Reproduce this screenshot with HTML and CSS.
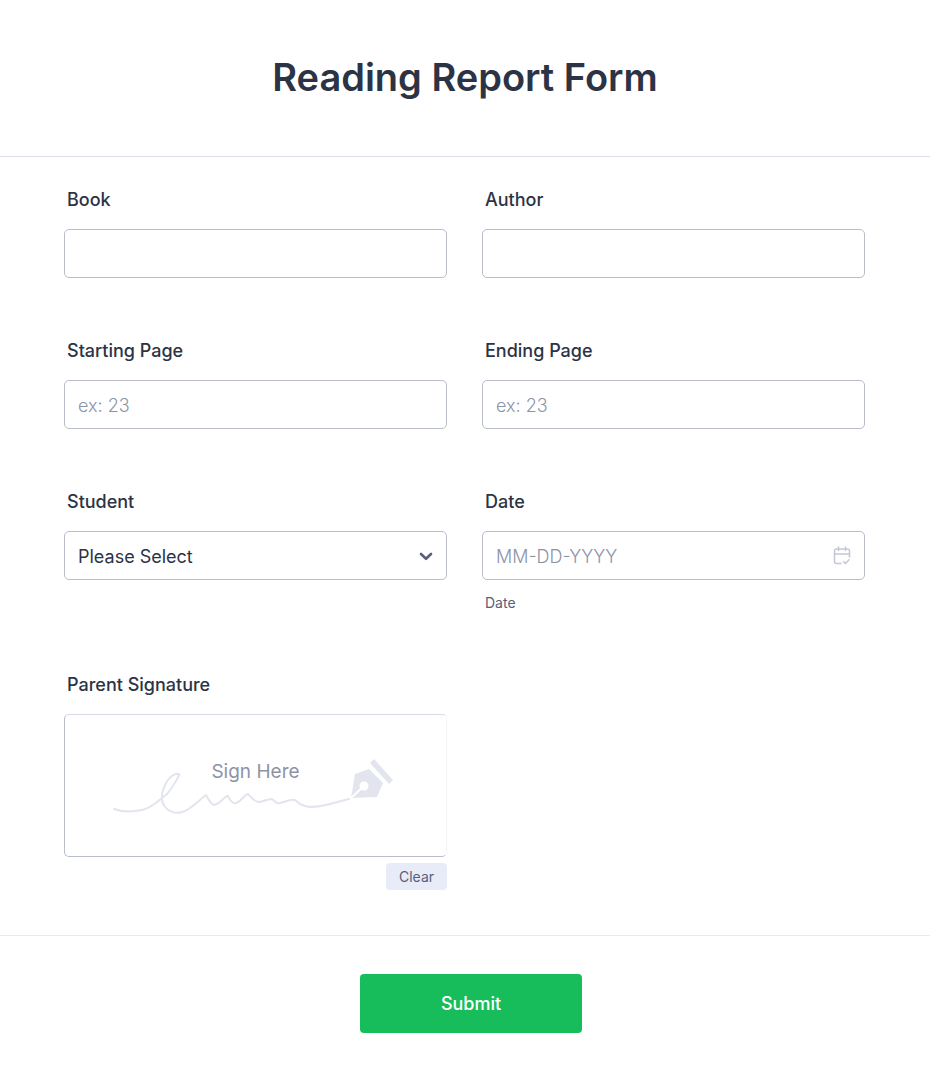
FILE: index.html
```html
<!DOCTYPE html>
<html lang="en">
<head>
<meta charset="utf-8">
<title>Reading Report Form</title>
<link rel="stylesheet" href="styles.css">
</head>
<body>
<form class="form">
  <header class="form-header"><h1 class="form-title">Reading Report Form</h1></header>
  <div class="fields">
    <div class="field">
      <label class="field-label">Book</label>
      <div class="control"></div>
    </div>
    <div class="field">
      <label class="field-label">Author</label>
      <div class="control"></div>
    </div>
    <div class="field">
      <label class="field-label">Starting Page</label>
      <div class="control placeholder">ex: 23</div>
    </div>
    <div class="field">
      <label class="field-label">Ending Page</label>
      <div class="control placeholder">ex: 23</div>
    </div>
    <div class="field">
      <label class="field-label">Student</label>
      <div class="control value">
        <span>Please Select</span>
        <svg class="chevron" width="14" height="9" viewBox="0 0 14 9" aria-hidden="true"><path d="M2 2 7 6.800 12 2" fill="none" stroke="#57607a" stroke-width="2.600" stroke-linecap="round" stroke-linejoin="round"/></svg>
      </div>
    </div>
    <div class="field field-date">
      <label class="field-label">Date</label>
      <div class="control placeholder">
        <span>MM-DD-YYYY</span>
        <svg class="calendar" width="18" height="20" viewBox="0 0 18 20" aria-hidden="true"><g fill="none" stroke="#c3c8d6" stroke-width="1.500" stroke-linecap="round" stroke-linejoin="round"><path d="M8 17.500H3.500a2 2 0 0 1-2-2V5a2 2 0 0 1 2-2h11a2 2 0 0 1 2 2v6"/><path d="M1.500 8h15M5.500 1v3.500M12.500 1v3.500"/><path d="m10.500 15.500 2 2 3.500-3.800"/></g></svg>
      </div>
      <div class="sublabel">Date</div>
    </div>
    <div class="field field-signature">
      <label class="field-label">Parent Signature</label>
      <div class="signature">
        <span class="sign-text">Sign Here</span>
        <svg class="sign-art" width="383" height="143" viewBox="0 0 383 143" aria-hidden="true">
          <path d="M50 95C58 98 68 98 78 96C88 94 95 86 103 80C110 72 117 58 115 61C113 58 105 62 101 71C97 80 97 88 101 93C105 98 112 100 118 98C127 96 135 86 142 81C145 85 145 89 150 91C157 90 161 81 164 82C166 86 168 90 172 89C178 87 181 80 184 80C187 83 190 88 195 88C200 87 205 85 208 85C211 87 212 90 216 89C221 88 226 85 231 86C234 89 239 93 247 93C260 93 272 88 285 85" fill="none" stroke="#e3e5ee" stroke-width="2" stroke-linecap="round" stroke-linejoin="round"/>
          <path d="M287 84 291 60 305 55 319 69 313 83Z" fill="#e3e5ee"/>
          <path d="M287 84 300 72" stroke="#fff" stroke-width="2"/>
          <circle cx="300" cy="72" r="4.500" fill="#fff"/>
          <path d="M306 49 310 45 329 66 325 70Z" fill="#e3e5ee"/>
        </svg>
      </div>
      <div class="signature-actions"><button type="button" class="clear-button">Clear</button></div>
    </div>
  </div>
  <footer class="form-footer"><button type="button" class="submit-button">Submit</button></footer>
</form>
</body>
</html>
```

FILE: styles.css
```css
* { box-sizing: border-box; }

html, body {
  margin: 0;
  padding: 0;
  background: #fff;
}

body {
  font-family: "Inter", "Liberation Sans", sans-serif;
  font-optical-sizing: none;
  color: #2c3345;
}

.form {
  width: 930px;
  height: 1082px;
}

.form-header {
  height: 157px;
  border-bottom: 1px solid #dcdfe9;
  padding-top: 52px;
  text-align: center;
}

.form-title {
  margin: 0;
  font-size: 38px;
  line-height: 50px;
  font-weight: 600;
  color: #2c3345;
}

.fields {
  display: grid;
  grid-template-columns: 383px 383px;
  column-gap: 35px;
  padding: 28px 0 0 64px;
  grid-auto-rows: min-content;
  height: 779px;
  border-bottom: 1px solid #e9ebf0;
}

.field {
  height: 151px;
}

.field-date {
  height: 183px;
}

.field-signature {
  grid-column: 1;
}

.field-label {
  display: block;
  margin: 1px 0 15px 3px;
  font-size: 18px;
  line-height: 28px;
  font-weight: 500;
  color: #2c3345;
}

.control {
  display: flex;
  align-items: center;
  justify-content: space-between;
  height: 49px;
  padding: 1px 13px 0;
  border: 1px solid #b8bdc9;
  border-radius: 5px;
  font-size: 18px;
}

.placeholder { color: #8d93a6; font-weight: 300; }

.value { color: #2c3345; }

.sublabel {
  margin: 14px 0 0 3px;
  font-size: 14px;
  line-height: 18px;
  color: #57607a;
}

.signature {
  position: relative;
  height: 143px;
  border: 1px solid #b8bdc9;
  border-top-color: #d8dbe5;
  border-right-color: #f3f4f7;
  border-radius: 5px;
}

.sign-text {
  position: absolute;
  top: 45px;
  left: 0;
  right: 0;
  text-align: center;
  font-size: 19px;
  line-height: 24px;
  color: #8d93a6;
}

.sign-art {
  position: absolute;
  top: -1px;
  left: -1px;
}

.signature-actions {
  display: flex;
  justify-content: flex-end;
  margin-top: 6px;
}

.clear-button {
  width: 61px;
  height: 27px;
  padding: 0;
  border: 0;
  border-radius: 4px;
  background: #e8ecf8;
  font-family: inherit;
  font-size: 14px;
  color: #57607a;
}

.form-footer {
  display: flex;
  justify-content: center;
  padding: 38px 12px 0 24px;
}

.submit-button {
  width: 222px;
  height: 59px;
  border: 0;
  border-radius: 4px;
  background: #18bd5b;
  color: #fff;
  font-family: inherit;
  font-size: 18px;
  font-weight: 500;
}
```
